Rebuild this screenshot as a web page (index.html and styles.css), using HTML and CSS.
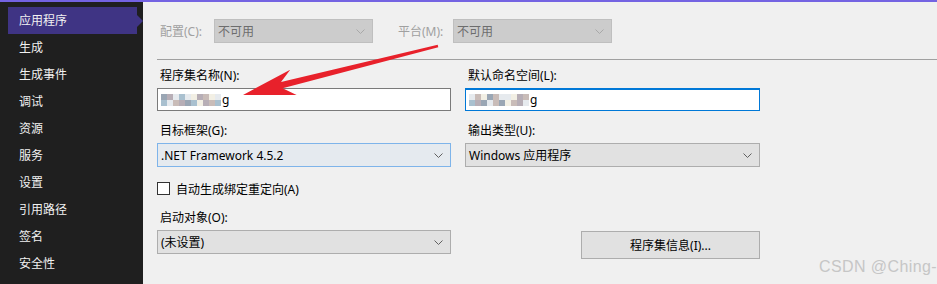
FILE: index.html
```html
<!DOCTYPE html>
<html lang="zh">
<head>
    <meta charset="UTF-8">
    <title>应用程序</title>
    <link rel="stylesheet" href="styles.css">
</head>
<body>
<div class="window">
    <div class="top-accent"></div>
    <div class="main">
        <!-- 左侧导航 -->
        <ul class="nav">
            <li class="nav-item active">应用程序</li>
            <li class="nav-item">生成</li>
            <li class="nav-item">生成事件</li>
            <li class="nav-item">调试</li>
            <li class="nav-item">资源</li>
            <li class="nav-item">服务</li>
            <li class="nav-item">设置</li>
            <li class="nav-item">引用路径</li>
            <li class="nav-item">签名</li>
            <li class="nav-item">安全性</li>
        </ul>

        <div class="content">
            <!-- 配置 / 平台 -->
            <div class="config-row">
                <span class="config-label">配置(C):</span>
                <div class="combo disabled w159">
                    <span>不可用</span>
                    <svg class="chev" width="9" height="5" viewBox="0 0 9 5"><polyline points="0.5,0.5 4.5,4.5 8.5,0.5" fill="none" stroke="currentColor"/></svg>
                </div>
                <span class="config-label second">平台(M):</span>
                <div class="combo disabled w159">
                    <span>不可用</span>
                    <svg class="chev" width="9" height="5" viewBox="0 0 9 5"><polyline points="0.5,0.5 4.5,4.5 8.5,0.5" fill="none" stroke="currentColor"/></svg>
                </div>
            </div>
            <div class="separator"></div>

            <div class="form">
                <div class="field">
                    <label class="field-label">程序集名称(N):</label>
                    <div class="textbox">
                        <span class="mosaic">
                            <i class="m1"></i><i class="m3"></i><i class="m2"></i><i class="m4"></i><i class="m2"></i><i class="m5"></i><i class="m3"></i><i class="m6"></i><i class="m5"></i><i class="m2"></i>
                            <i class="m4"></i><i class="m2"></i><i class="m6"></i><i class="m3"></i><i class="m1"></i><i class="m4"></i><i class="m5"></i><i class="m3"></i><i class="m6"></i><i class="m4"></i>
                        </span><span class="tail">g</span>
                    </div>
                </div>
                <div class="field">
                    <label class="field-label">默认命名空间(L):</label>
                    <div class="textbox focused">
                        <span class="mosaic">
                            <i class="m2"></i><i class="m6"></i><i class="m5"></i><i class="m1"></i><i class="m6"></i><i class="m2"></i><i class="m2"></i><i class="m5"></i><i class="m3"></i><i class="m6"></i>
                            <i class="m4"></i><i class="m3"></i><i class="m1"></i><i class="m2"></i><i class="m6"></i><i class="m1"></i><i class="m5"></i><i class="m6"></i><i class="m3"></i><i class="m2"></i>
                        </span><span class="tail">g</span>
                    </div>
                </div>

                <div class="field">
                    <label class="field-label">目标框架(G):</label>
                    <div class="combo hover">
                        <span>.NET Framework 4.5.2</span>
                        <svg class="chev" width="9" height="5" viewBox="0 0 9 5"><polyline points="0.5,0.5 4.5,4.5 8.5,0.5" fill="none" stroke="currentColor"/></svg>
                    </div>
                </div>
                <div class="field">
                    <label class="field-label">输出类型(U):</label>
                    <div class="combo">
                        <span>Windows 应用程序</span>
                        <svg class="chev" width="9" height="5" viewBox="0 0 9 5"><polyline points="0.5,0.5 4.5,4.5 8.5,0.5" fill="none" stroke="currentColor"/></svg>
                    </div>
                </div>

                <div class="check-row">
                    <span class="checkbox"></span>
                    <span>自动生成绑定重定向(A)</span>
                </div>
                <div></div>

                <div class="field">
                    <label class="field-label">启动对象(O):</label>
                    <div class="combo">
                        <span>(未设置)</span>
                        <svg class="chev" width="9" height="5" viewBox="0 0 9 5"><polyline points="0.5,0.5 4.5,4.5 8.5,0.5" fill="none" stroke="currentColor"/></svg>
                    </div>
                </div>
                <div class="button-cell">
                    <button class="btn">程序集信息(I)...</button>
                </div>
            </div>
        </div>
    </div>

    <!-- 标注箭头 -->
    <svg class="annotation" width="937" height="284" viewBox="0 0 937 284">
        <polygon fill="#e8212b" points="243,95 290.2,69.7 281,82.1 437.7,44.7 438.3,47.3 282.6,88.3 296.6,94.9"/>
    </svg>
    <div class="watermark">CSDN @Ching-</div>
</div>
</body>
</html>
```

FILE: styles.css
```css
/* ========== 变量 ========== */
:root {
    --accent: #7463e2;
    --nav-bg: #1f1f1f;
    --nav-active: #3f3484;
    --pane-bg: #f0f0f0;
    --text: #000;
    --disabled-text: #a0a0a0;
    --combo-bg: #e1e1e1;
    --combo-border: #adadad;
    --focus: #0078d7;
}

* {
    box-sizing: border-box;
}

body {
    margin: 0;
    padding: 0;
    font-family: "Noto Sans", "Noto Sans CJK SC", sans-serif;
    font-size: 12px;
    color: var(--text);
    background: var(--pane-bg);
}

.window {
    position: relative;
    width: 937px;
    height: 284px;
    overflow: hidden;
}

.top-accent {
    height: 2px;
    background: var(--accent);
}

.main {
    display: flex;
    height: 282px;
}

/* ========== 导航 ========== */
.nav {
    list-style: none;
    margin: 0;
    padding: 5px 6px 0 8px;
    width: 143px;
    flex-shrink: 0;
    background: var(--nav-bg);
}
.nav-item {
    position: relative;
    height: 27px;
    line-height: 27px;
    padding-left: 11px;
    color: #f1f1f1;
    font-size: 12px;
}
.nav-item.active {
    background: var(--nav-active);
}
.nav-item.active:after {
    content: "";
    position: absolute;
    right: -6px;
    top: 8px;
    border-top: 6px solid transparent;
    border-bottom: 6px solid transparent;
    border-left: 6px solid var(--nav-active);
}

/* ========== 右侧面板 ========== */
.content {
    flex: 1;
    padding-top: 17px;
    background: var(--pane-bg);
}

.config-row {
    display: flex;
    align-items: center;
    padding-left: 14px;
}
.config-label {
    width: 57px;
    padding-left: 3px;
    color: var(--disabled-text);
}
.config-label.second {
    width: 58px;
    margin-left: 22px;
}

.separator {
    margin: 16px 0 0 14px;
    height: 1px;
    background: #a0a0a0;
}

.form {
    display: grid;
    grid-template-columns: 294px 295px;
    column-gap: 14px;
    margin-left: 14px;
    padding-top: 8px;
}

.field {
    display: flex;
    flex-direction: column;
    gap: 4px;
    margin-bottom: 12px;
}
.field-label {
    line-height: 16px;
    padding-left: 3px;
}

/* --- 文本框 --- */
.textbox {
    height: 23px;
    background: #fff;
    border: 1px solid #7a7a7a;
    display: flex;
    align-items: center;
    padding-left: 3px;
}
.textbox.focused {
    border-color: var(--focus);
    box-shadow: inset 0 1px 0 var(--focus);
}
.mosaic {
    display: grid;
    grid-template-columns: repeat(10, 6px);
    grid-auto-rows: 6px;
    margin-top: 1px;
}
.mosaic i {
    display: block;
}
.m1 { background: #9aa6b4; }
.m2 { background: #e6eaee; }
.m3 { background: #b7aeb6; }
.m4 { background: #a9c0cf; }
.m5 { background: #f2efe4; }
.m6 { background: #c9bcb8; }
.tail {
    margin-left: 1px;
    line-height: 20px;
}

/* --- 下拉框 --- */
.combo {
    height: 24px;
    display: flex;
    align-items: center;
    justify-content: space-between;
    padding: 0 7px 0 3px;
    background: var(--combo-bg);
    border: 1px solid var(--combo-border);
    color: #000;
}
.combo .chev {
    color: #606060;
}
.combo.w159 {
    width: 159px;
}
.combo.disabled {
    background: #cccccc;
    border-color: #bfbfbf;
    color: #6d6d6d;
}
.combo.disabled .chev {
    color: #a8a8a8;
}
.combo.hover {
    background: #e5eaef;
    border-color: #7eb4ea;
}

/* --- 复选框 --- */
.check-row {
    display: flex;
    align-items: center;
    gap: 6px;
    height: 13px;
    margin: 3px 0 15px;
}
.checkbox {
    width: 13px;
    height: 13px;
    background: #fff;
    border: 1px solid #333;
}

/* --- 按钮 --- */
.button-cell {
    display: flex;
    justify-content: flex-end;
    align-items: flex-start;
    padding-top: 21px;
}
.btn {
    width: 179px;
    height: 28px;
    background: var(--combo-bg);
    border: 1px solid var(--combo-border);
    font-family: inherit;
    font-size: 12px;
    color: #000;
    padding: 0;
}

/* ========== 标注 ========== */
.annotation {
    position: absolute;
    left: 0;
    top: 0;
    pointer-events: none;
}
.watermark {
    position: absolute;
    left: 819px;
    top: 258px;
    white-space: nowrap;
    font-family: "Liberation Sans", Arial, sans-serif;
    font-size: 16px;
    letter-spacing: 0.4px;
    color: #c6c6c6;
}
```
